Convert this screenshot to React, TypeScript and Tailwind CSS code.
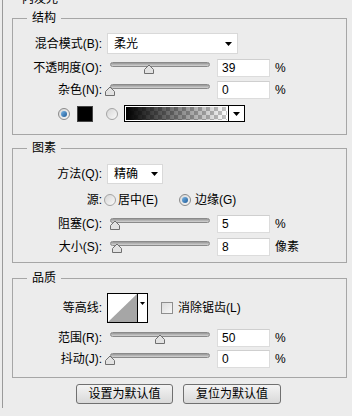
import React from "react";

function Thumb() {
  return (
    <svg width="12" height="10" viewBox="0 0 12 10">
      <path d="M1.5 9.5 L1.5 5.5 L6 1 L10.5 5.5 L10.5 9.5 Z" fill="#e2e2e2" stroke="#6f6f6f" strokeWidth="1" />
    </svg>
  );
}

function Slider({ pos }: { pos: number }) {
  return (
    <div className="relative ml-[3px] w-[106px] h-[18px] shrink-0">
      <div className="absolute left-[5px] top-[3px] w-[100px] h-[5px] rounded-full border border-[#8a8a8a] bg-gradient-to-b from-[#979797] to-[#d4d4d4]" />
      <div className="absolute top-[5px] h-[10px] w-[12px]" style={{ left: 5 + pos - 6 }}>
        <Thumb />
      </div>
    </div>
  );
}

function Field({ value }: { value: string }) {
  return (
    <div className="ml-[6px] w-[53px] h-[18px] shrink-0 bg-white border border-[#dcdcdc] border-t-[#cfcfcf] pl-[4px] flex items-center leading-none">
      {value}
    </div>
  );
}

function Label({ text }: { text: string }) {
  return <div className="w-[89px] shrink-0 text-right whitespace-nowrap">{text}</div>;
}

function SliderRow({ label, pos, value, unit, cls }: { label: string; pos: number; value: string; unit: string; cls: string }) {
  return (
    <div className={"flex items-center h-[18px] " + cls}>
      <Label text={label} />
      <Slider pos={pos} />
      <Field value={value} />
      <div className="ml-[5px] whitespace-nowrap">{unit}</div>
    </div>
  );
}

function Radio({ on }: { on: boolean }) {
  return on ? (
    <div className="w-[12px] h-[12px] shrink-0 rounded-full border border-[#8a8a8a] bg-gradient-to-br from-[#d8d8d8] to-[#f6f6f6] flex items-center justify-center">
      <div className="w-[6px] h-[6px] rounded-full bg-gradient-to-br from-[#79b6e6] to-[#1d5b98]" />
    </div>
  ) : (
    <div className="w-[12px] h-[12px] shrink-0 rounded-full border border-[#a4a4a4] bg-gradient-to-br from-[#d6d6d6] to-[#fafafa]" />
  );
}

function Arrow() {
  return (
    <svg width="7" height="4" viewBox="0 0 7 4">
      <path d="M0 0 L7 0 L3.5 4 Z" fill="#000" />
    </svg>
  );
}

function Group({ title, cls, children }: { title: string; cls: string; children: React.ReactNode }) {
  return (
    <div className={"relative w-[335px] border border-[#a6a6a6] " + cls}>
      <div className="absolute left-[14px] top-[-8px] px-[5px] bg-[#ececec] leading-[14px]">{title}</div>
      {children}
    </div>
  );
}

export default function App() {
  return (
    <div className="w-[352px] h-[416px] overflow-hidden bg-[#ececec] text-[12px] text-black font-['Liberation_Sans','Noto_Sans_CJK_SC',sans-serif]">
      <div className="ml-[2px] h-full border-l border-[#9a9a9a] pl-[9px]">
        <div className="-mt-[8px] h-[14px] leading-[14px] pl-[10px]">内发光</div>
        <Group title="结构" cls="mt-[12px] pt-[14px] pb-[12px]">
          <div className="flex items-center h-[21px]">
            <Label text="混合模式(B):" />
            <div className="ml-[5px] w-[131px] h-[21px] bg-white border border-[#d9d9d9] flex items-center justify-between pl-[6px] pr-[5px]">
              <span>柔光</span>
              <Arrow />
            </div>
          </div>
          <SliderRow cls="mt-[5px]" label="不透明度(O):" pos={39} value="39" unit="%" />
          <SliderRow cls="mt-[4px]" label="杂色(N):" pos={0} value="0" unit="%" />
          <div className="mt-[6px] flex items-center h-[17px]">
            <div className="ml-[45px]">
              <Radio on={true} />
            </div>
            <div className="ml-[7px] w-[16px] h-[16px] bg-black border border-[#444]" />
            <div className="ml-[13px]">
              <Radio on={false} />
            </div>
            <div className="ml-[6px] flex h-[17px]">
              <div className="w-[105px] h-[17px] border border-black bg-white p-[1px]">
                <svg width="101" height="13" viewBox="0 0 101 13" className="block">
                  <defs>
                    <pattern id="chk" width="8" height="8" patternUnits="userSpaceOnUse">
                      <rect width="8" height="8" fill="#fff" />
                      <rect width="4" height="4" fill="#c4c4c4" />
                      <rect x="4" y="4" width="4" height="4" fill="#c4c4c4" />
                    </pattern>
                    <linearGradient id="fade" x1="0" x2="1" y1="0" y2="0">
                      <stop offset="0" stopColor="#000" stopOpacity="1" />
                      <stop offset="1" stopColor="#000" stopOpacity="0" />
                    </linearGradient>
                  </defs>
                  <rect width="101" height="13" fill="url(#chk)" />
                  <rect width="101" height="13" fill="url(#fade)" />
                </svg>
              </div>
              <div className="-ml-[1px] w-[17px] h-[17px] border border-black bg-white flex items-center justify-center">
                <Arrow />
              </div>
            </div>
          </div>
        </Group>

        <Group title="图素" cls="mt-[13px] pt-[15px] pb-[6px]">
          <div className="flex items-center h-[20px]">
            <Label text="方法(Q):" />
            <div className="ml-[5px] w-[56px] h-[20px] bg-white border border-[#d9d9d9] flex items-center justify-between pl-[6px] pr-[4px]">
              <span>精确</span>
              <Arrow />
            </div>
          </div>
          <div className="mt-[9px] flex items-center h-[14px]">
            <Label text="源:" />
            <div className="ml-[2px] w-[75px] flex items-center">
              <Radio on={false} />
              <span className="ml-[2px] whitespace-nowrap">居中(E)</span>
            </div>
            <Radio on={true} />
            <span className="ml-[4px] whitespace-nowrap">边缘(G)</span>
          </div>
          <SliderRow cls="mt-[8px]" label="阻塞(C):" pos={5} value="5" unit="%" />
          <SliderRow cls="mt-[5px]" label="大小(S):" pos={7} value="8" unit="像素" />
        </Group>

        <Group title="品质" cls="mt-[15px] pt-[14px] pb-[9px]">
          <div className="flex items-center h-[30px]">
            <Label text="等高线:" />
            <div className="ml-[5px] flex h-[30px]">
              <div className="w-[31px] h-[30px] border border-black bg-white">
                <svg width="29" height="28" viewBox="0 0 29 28" className="block">
                  <path d="M0 28 L29 0 L29 28 Z" fill="#a6a6a6" />
                </svg>
              </div>
              <div className="-ml-[1px] w-[11px] h-[30px] border border-black bg-white flex justify-center pt-[8px]">
                <svg width="5" height="3" viewBox="0 0 5 3">
                  <path d="M0 0 L5 0 L2.5 3 Z" fill="#000" />
                </svg>
              </div>
            </div>
            <div className="ml-[13px] w-[12px] h-[12px] border border-[#8e8e8e] bg-gradient-to-br from-[#dcdcdc] to-[#f7f7f7]" />
            <span className="ml-[5px] whitespace-nowrap">消除锯齿(L)</span>
          </div>
          <SliderRow cls="mt-[6px]" label="范围(R):" pos={50} value="50" unit="%" />
          <SliderRow cls="mt-[3px]" label="抖动(J):" pos={0} value="0" unit="%" />
        </Group>

        <div className="mt-[6px] flex pl-[64px] gap-[10px]">
          <div className="w-[97px] h-[20px] rounded-[3px] border border-[#707070] bg-gradient-to-b from-[#f4f4f4] to-[#d9d9d9] flex items-center justify-center">
            设置为默认值
          </div>
          <div className="w-[98px] h-[20px] rounded-[3px] border border-[#707070] bg-gradient-to-b from-[#f4f4f4] to-[#d9d9d9] flex items-center justify-center">
            复位为默认值
          </div>
        </div>
      </div>
    </div>
  );
}
